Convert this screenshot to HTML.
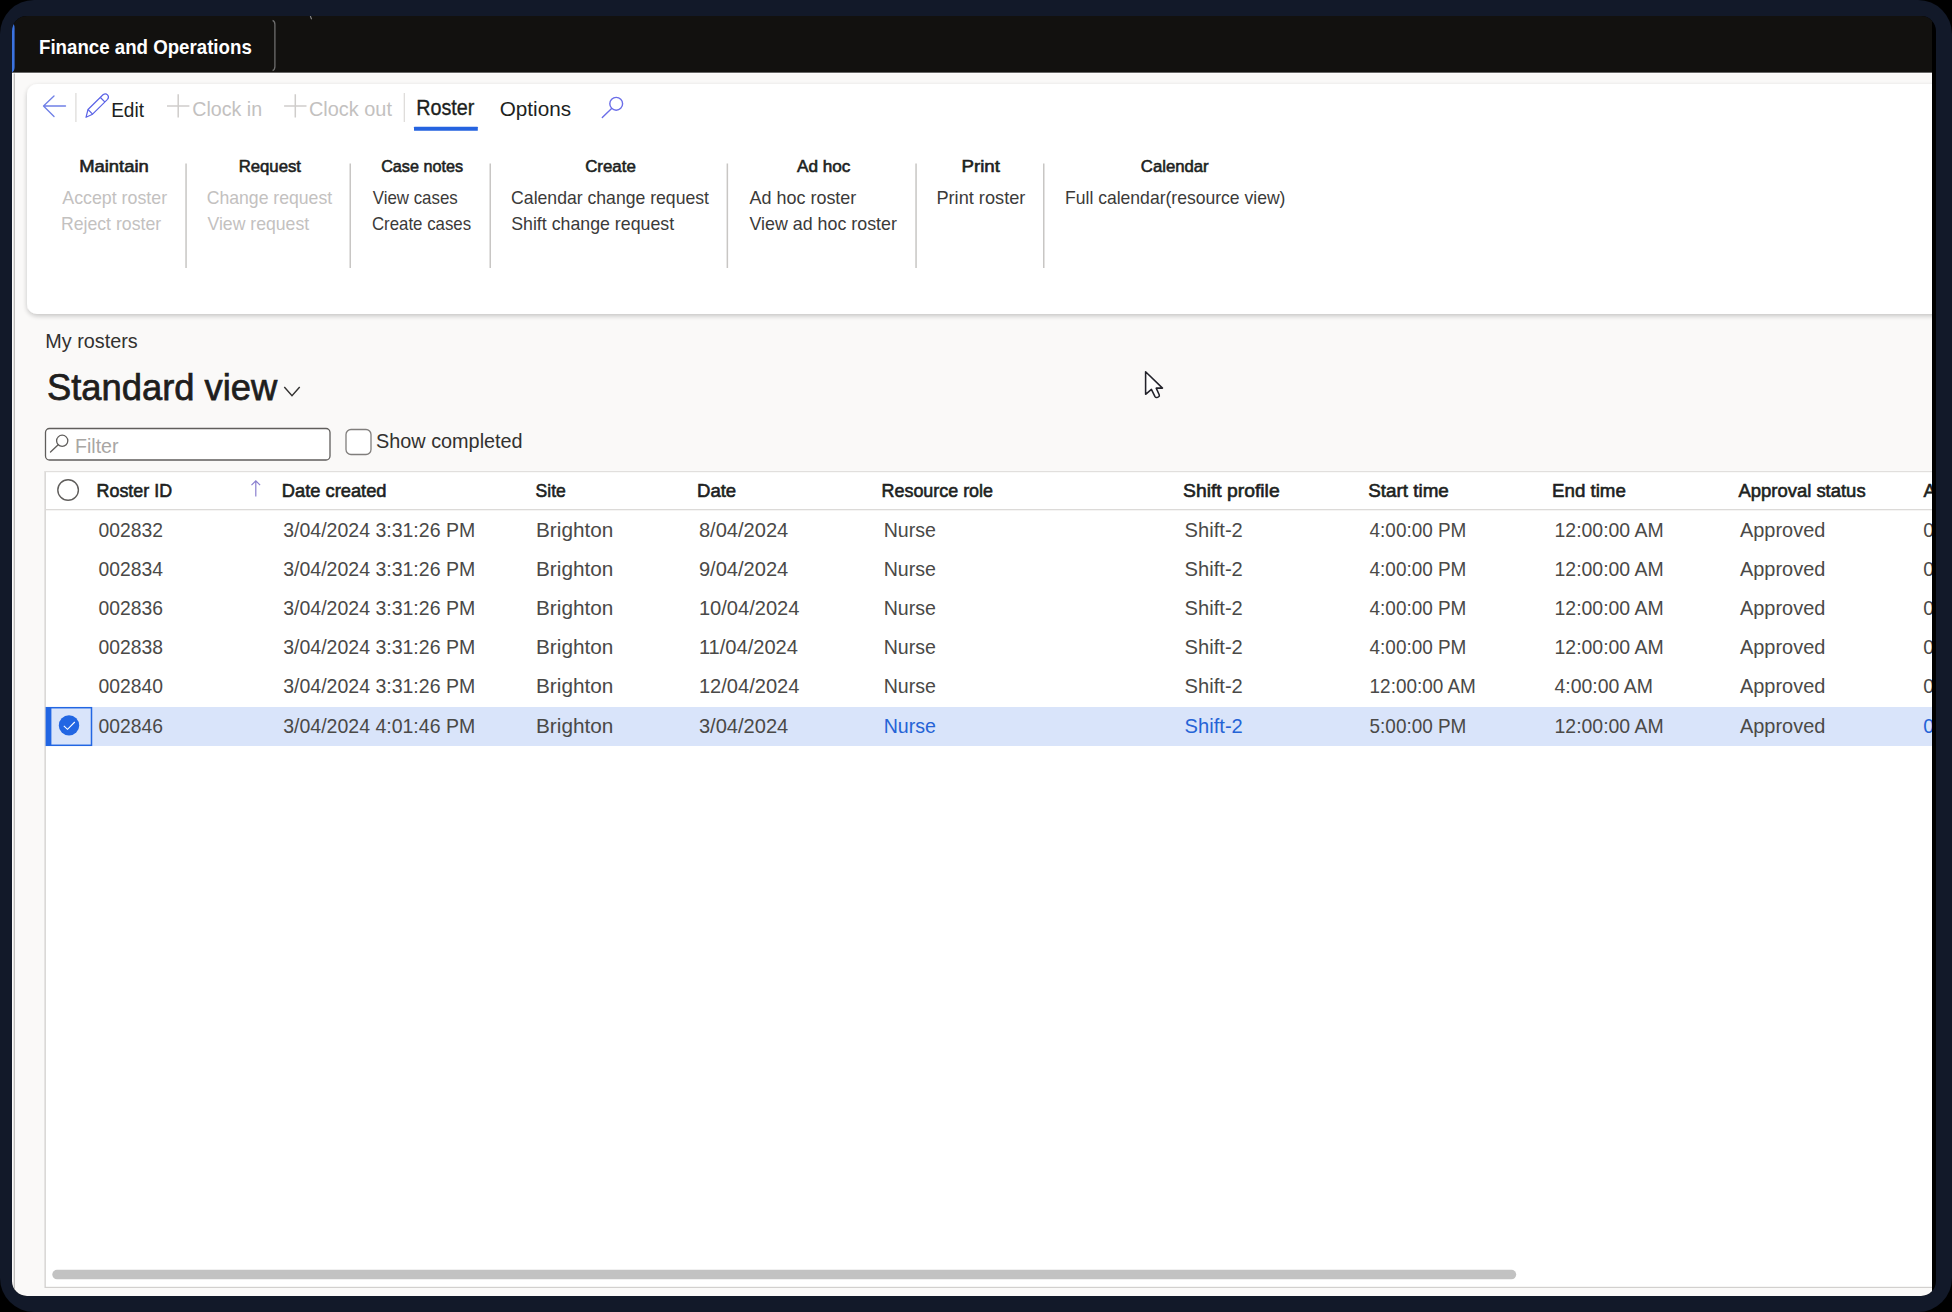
<!DOCTYPE html>
<html><head><meta charset="utf-8"><title>My rosters</title>
<style>html,body{margin:0;padding:0;background:#000;overflow:hidden}svg{display:block}text{font-family:"Liberation Sans",sans-serif;white-space:pre}</style>
</head><body>
<svg width="1952" height="1312" viewBox="0 0 1952 1312">
<rect x="0" y="0" width="1952" height="1312" fill="#000"/>
<rect x="0" y="0" width="1952" height="1312" rx="34" fill="#121929"/>
<defs><clipPath id="win"><rect x="12" y="16" width="1924" height="1280" rx="15"/></clipPath><clipPath id="cl"><rect x="0" y="0" width="1932" height="1312"/></clipPath></defs>
<g clip-path="url(#win)">
<rect x="12" y="16" width="1924" height="1280" fill="#000"/>
<rect x="12" y="72.5" width="1920" height="1224" fill="#faf9f8"/><rect x="12" y="72.5" width="1920" height="1.2" fill="#ffffff"/>
<rect x="12" y="16" width="1920" height="56.5" fill="#12110f"/>
<path d="M12 22.5 Q14.6 24 14.6 28 V67 Q14.6 71 12 72.5 Z" fill="#3b73e0"/>
<rect x="13.7" y="73.5" width="1.2" height="1223" fill="#b9b7b5"/>
<g clip-path="url(#cl)">
<path d="M272.6 20.4 Q274.9 21.4 274.9 24.5 V66.5 Q274.9 69.6 272.6 70.6" stroke="#6e6e6e" stroke-width="1.3" fill="none"/>
<path d="M310.3 16 L311.6 19.3" stroke="#8a8a8a" stroke-width="1.1"/>
<text x="38.99" y="53.80" font-size="21" font-weight="700" fill="#ffffff" textLength="212.79" lengthAdjust="spacingAndGlyphs">Finance and Operations</text>
<defs><filter id="sh" x="-5%" y="-20%" width="110%" height="140%"><feGaussianBlur in="SourceAlpha" stdDeviation="2.5"/><feOffset dy="1.5"/><feComponentTransfer><feFuncA type="linear" slope="0.22"/></feComponentTransfer><feMerge><feMergeNode/><feMergeNode in="SourceGraphic"/></feMerge></filter></defs>
<rect x="27" y="84" width="1930" height="230" rx="10" fill="#ffffff" filter="url(#sh)"/>
<path d="M65.5 106 H44 M54 96 L43.5 106 L54 116.5" stroke="#7080e6" stroke-width="1.35" fill="none" stroke-linecap="round" stroke-linejoin="round"/>
<rect x="75.3" y="93" width="1.2" height="29" fill="#dcdad8"/>
<g stroke="#5b63e6" stroke-width="1.2" fill="none" stroke-linejoin="round"><path d="M86 117.3 L88 109.5 L103 94.8 Q105.5 92.8 107.5 94.8 Q109.5 97 107.5 99.3 L92.6 114.2 Z"/><path d="M100.4 97.5 L105 102.2"/><path d="M88 109.5 L92.6 114.2"/></g>
<text x="111.18" y="116.50" font-size="21" font-weight="400" fill="#201f1e" textLength="32.78" lengthAdjust="spacingAndGlyphs">Edit</text>
<path d="M167.0 106 H189.39999999999998 M178.2 94.2 V117.5" stroke="#cfcdcb" stroke-width="1.5"/>
<path d="M284.1 106 H306.5 M295.3 94.2 V117.5" stroke="#cfcdcb" stroke-width="1.5"/>
<text x="192.22" y="116.30" font-size="21" font-weight="400" fill="#c3c1bf" textLength="69.89" lengthAdjust="spacingAndGlyphs">Clock in</text>
<text x="309.00" y="116.30" font-size="21" font-weight="400" fill="#c3c1bf" textLength="82.96" lengthAdjust="spacingAndGlyphs">Clock out</text>
<rect x="403.7" y="93" width="1.2" height="29" fill="#dcdad8"/>
<text x="416.22" y="115.10" font-size="21.5" font-weight="400" fill="#201f1e" textLength="58.18" lengthAdjust="spacingAndGlyphs" stroke="#201f1e" stroke-width="0.35">Roster</text>
<rect x="414" y="126.8" width="63.8" height="4" rx="0.5" fill="#2563e0"/>
<text x="499.67" y="116.00" font-size="21" font-weight="400" fill="#201f1e" textLength="71.38" lengthAdjust="spacingAndGlyphs">Options</text>
<g stroke="#6b6ee8" stroke-width="1.4" fill="none"><circle cx="616.2" cy="103.8" r="6.4"/><path d="M611.6 108.4 L602.3 117.6" stroke-linecap="round"/></g>
<text x="79.23" y="171.50" font-size="15.7" font-weight="400" fill="#201f1e" textLength="69.57" lengthAdjust="spacingAndGlyphs" stroke="#201f1e" stroke-width="0.55">Maintain</text>
<text x="238.66" y="171.50" font-size="15.7" font-weight="400" fill="#201f1e" textLength="62.30" lengthAdjust="spacingAndGlyphs" stroke="#201f1e" stroke-width="0.55">Request</text>
<text x="381.19" y="171.50" font-size="15.7" font-weight="400" fill="#201f1e" textLength="81.85" lengthAdjust="spacingAndGlyphs" stroke="#201f1e" stroke-width="0.55">Case notes</text>
<text x="585.16" y="171.50" font-size="15.7" font-weight="400" fill="#201f1e" textLength="50.63" lengthAdjust="spacingAndGlyphs" stroke="#201f1e" stroke-width="0.55">Create</text>
<text x="797.00" y="171.50" font-size="15.7" font-weight="400" fill="#201f1e" textLength="53.40" lengthAdjust="spacingAndGlyphs" stroke="#201f1e" stroke-width="0.55">Ad hoc</text>
<text x="961.51" y="171.50" font-size="15.7" font-weight="400" fill="#201f1e" textLength="38.41" lengthAdjust="spacingAndGlyphs" stroke="#201f1e" stroke-width="0.55">Print</text>
<text x="1140.86" y="171.50" font-size="15.7" font-weight="400" fill="#201f1e" textLength="67.84" lengthAdjust="spacingAndGlyphs" stroke="#201f1e" stroke-width="0.55">Calendar</text>
<text x="62.30" y="203.80" font-size="19" font-weight="400" fill="#c3c1bf" textLength="104.79" lengthAdjust="spacingAndGlyphs">Accept roster</text>
<text x="60.89" y="230.00" font-size="19" font-weight="400" fill="#c3c1bf" textLength="100.24" lengthAdjust="spacingAndGlyphs">Reject roster</text>
<text x="206.72" y="203.80" font-size="19" font-weight="400" fill="#c3c1bf" textLength="125.39" lengthAdjust="spacingAndGlyphs">Change request</text>
<text x="207.51" y="230.00" font-size="19" font-weight="400" fill="#c3c1bf" textLength="101.63" lengthAdjust="spacingAndGlyphs">View request</text>
<text x="372.72" y="203.80" font-size="19" font-weight="400" fill="#3b3a39" textLength="85.07" lengthAdjust="spacingAndGlyphs">View cases</text>
<text x="371.96" y="230.00" font-size="19" font-weight="400" fill="#3b3a39" textLength="99.16" lengthAdjust="spacingAndGlyphs">Create cases</text>
<text x="511.12" y="203.80" font-size="19" font-weight="400" fill="#3b3a39" textLength="197.87" lengthAdjust="spacingAndGlyphs">Calendar change request</text>
<text x="511.20" y="230.00" font-size="19" font-weight="400" fill="#3b3a39" textLength="162.94" lengthAdjust="spacingAndGlyphs">Shift change request</text>
<text x="749.60" y="203.80" font-size="19" font-weight="400" fill="#3b3a39" textLength="106.71" lengthAdjust="spacingAndGlyphs">Ad hoc roster</text>
<text x="749.51" y="230.00" font-size="19" font-weight="400" fill="#3b3a39" textLength="147.43" lengthAdjust="spacingAndGlyphs">View ad hoc roster</text>
<text x="936.45" y="203.80" font-size="19" font-weight="400" fill="#3b3a39" textLength="88.92" lengthAdjust="spacingAndGlyphs">Print roster</text>
<text x="1065.00" y="203.80" font-size="19" font-weight="400" fill="#3b3a39" textLength="220.47" lengthAdjust="spacingAndGlyphs">Full calendar(resource view)</text>
<rect x="185.3" y="163.5" width="1.5" height="104.5" fill="#c8c6c4"/>
<rect x="349.5" y="163.5" width="1.5" height="104.5" fill="#c8c6c4"/>
<rect x="489.5" y="163.5" width="1.5" height="104.5" fill="#c8c6c4"/>
<rect x="726.6" y="163.5" width="1.5" height="104.5" fill="#c8c6c4"/>
<rect x="915.3" y="163.5" width="1.5" height="104.5" fill="#c8c6c4"/>
<rect x="1043.0" y="163.5" width="1.5" height="104.5" fill="#c8c6c4"/>
<text x="45.32" y="347.60" font-size="21" font-weight="400" fill="#323130" textLength="92.42" lengthAdjust="spacingAndGlyphs">My rosters</text>
<text x="46.96" y="399.50" font-size="37.8" font-weight="400" fill="#1f1e1d" textLength="230.33" lengthAdjust="spacingAndGlyphs" stroke="#1f1e1d" stroke-width="0.75">Standard view</text>
<path d="M284.3 387 L292 395.8 L299.7 387" stroke="#323130" stroke-width="1.4" fill="none"/>
<rect x="45.5" y="428.5" width="284.5" height="31.5" rx="4" fill="#fff" stroke="#605e5c" stroke-width="1.3"/>
<g stroke="#605e5c" stroke-width="1.3" fill="none"><circle cx="62.2" cy="440.8" r="5.6"/><path d="M58.2 444.8 L50.5 452" stroke-linecap="round"/></g>
<text x="75.03" y="453.30" font-size="20" font-weight="400" fill="#a8a6a4" textLength="43.50" lengthAdjust="spacingAndGlyphs">Filter</text>
<rect x="346" y="429.5" width="25" height="25" rx="5" fill="#fff" stroke="#807e7c" stroke-width="1.3"/>
<text x="376.01" y="447.60" font-size="20.6" font-weight="400" fill="#323130" textLength="146.65" lengthAdjust="spacingAndGlyphs">Show completed</text>
<rect x="45" y="471.5" width="1890" height="816" fill="#ffffff"/>
<rect x="44.5" y="471" width="1.3" height="817" fill="#d2d0ce"/>
<rect x="45" y="471" width="1890" height="1.2" fill="#e1dfdd"/>
<rect x="45" y="1286.8" width="1890" height="1.2" fill="#d2d0ce"/>
<rect x="45" y="509" width="1890" height="1.3" fill="#dcdad8"/>
<circle cx="68.1" cy="490" r="10.3" fill="none" stroke="#605e5c" stroke-width="1.4"/>
<text x="96.57" y="497.00" font-size="18.5" font-weight="400" fill="#201f1e" textLength="75.49" lengthAdjust="spacingAndGlyphs" stroke="#201f1e" stroke-width="0.6">Roster ID</text>
<text x="281.84" y="497.00" font-size="18.5" font-weight="400" fill="#201f1e" textLength="104.66" lengthAdjust="spacingAndGlyphs" stroke="#201f1e" stroke-width="0.6">Date created</text>
<text x="535.61" y="497.00" font-size="18.5" font-weight="400" fill="#201f1e" textLength="30.24" lengthAdjust="spacingAndGlyphs" stroke="#201f1e" stroke-width="0.6">Site</text>
<text x="697.02" y="497.00" font-size="18.5" font-weight="400" fill="#201f1e" textLength="39.16" lengthAdjust="spacingAndGlyphs" stroke="#201f1e" stroke-width="0.6">Date</text>
<text x="881.57" y="497.00" font-size="18.5" font-weight="400" fill="#201f1e" textLength="111.44" lengthAdjust="spacingAndGlyphs" stroke="#201f1e" stroke-width="0.6">Resource role</text>
<text x="1183.13" y="497.00" font-size="18.5" font-weight="400" fill="#201f1e" textLength="96.49" lengthAdjust="spacingAndGlyphs" stroke="#201f1e" stroke-width="0.6">Shift profile</text>
<text x="1368.25" y="497.00" font-size="18.5" font-weight="400" fill="#201f1e" textLength="80.57" lengthAdjust="spacingAndGlyphs" stroke="#201f1e" stroke-width="0.6">Start time</text>
<text x="1552.00" y="497.00" font-size="18.5" font-weight="400" fill="#201f1e" textLength="73.87" lengthAdjust="spacingAndGlyphs" stroke="#201f1e" stroke-width="0.6">End time</text>
<text x="1738.50" y="497.00" font-size="18.5" font-weight="400" fill="#201f1e" textLength="127.10" lengthAdjust="spacingAndGlyphs" stroke="#201f1e" stroke-width="0.6">Approval status</text>
<g clip-path="url(#cl)"><text x="1923.50" y="497.00" font-size="18.5" font-weight="400" fill="#201f1e" textLength="12.34" lengthAdjust="spacingAndGlyphs" stroke="#201f1e" stroke-width="0.6">A</text></g>
<path d="M255.8 496.5 V481 M251.5 485.2 L255.8 480.8 L260.1 485.2" stroke="#8a7fcf" stroke-width="1.2" fill="none"/>
<rect x="46" y="707" width="1886" height="39" fill="#d9e4fa"/>
<rect x="45.8" y="707" width="5.6" height="39" fill="#2266e3"/>
<rect x="46.5" y="707.7" width="45" height="37.6" fill="none" stroke="#2266e3" stroke-width="1.5"/>
<circle cx="69" cy="725.4" r="10.2" fill="#2266e3"/>
<path d="M63.8 725.8 L67.5 729.3 L74.8 722" stroke="#fff" stroke-width="1.1" fill="none"/>
<g clip-path="url(#cl)"><text x="98.53" y="536.60" font-size="21" font-weight="400" fill="#4a4947" textLength="64.38" lengthAdjust="spacingAndGlyphs">002832</text><text x="283.22" y="536.60" font-size="21" font-weight="400" fill="#4a4947" textLength="191.96" lengthAdjust="spacingAndGlyphs">3/04/2024 3:31:26 PM</text><text x="536.04" y="536.60" font-size="21" font-weight="400" fill="#4a4947" textLength="77.30" lengthAdjust="spacingAndGlyphs">Brighton</text><text x="698.90" y="536.60" font-size="21" font-weight="400" fill="#4a4947" textLength="89.38" lengthAdjust="spacingAndGlyphs">8/04/2024</text><text x="883.63" y="536.60" font-size="21" font-weight="400" fill="#4a4947" textLength="52.30" lengthAdjust="spacingAndGlyphs">Nurse</text><text x="1184.59" y="536.60" font-size="21" font-weight="400" fill="#4a4947" textLength="58.22" lengthAdjust="spacingAndGlyphs">Shift-2</text><text x="1369.62" y="536.60" font-size="21" font-weight="400" fill="#4a4947" textLength="96.67" lengthAdjust="spacingAndGlyphs">4:00:00 PM</text><text x="1554.54" y="536.60" font-size="21" font-weight="400" fill="#4a4947" textLength="109.12" lengthAdjust="spacingAndGlyphs">12:00:00 AM</text><text x="1740.00" y="536.60" font-size="21" font-weight="400" fill="#4a4947" textLength="85.31" lengthAdjust="spacingAndGlyphs">Approved</text><text x="1923.21" y="536.60" font-size="21" font-weight="400" fill="#4a4947" textLength="10.98" lengthAdjust="spacingAndGlyphs">0</text><text x="98.53" y="575.78" font-size="21" font-weight="400" fill="#4a4947" textLength="64.38" lengthAdjust="spacingAndGlyphs">002834</text><text x="283.22" y="575.78" font-size="21" font-weight="400" fill="#4a4947" textLength="191.96" lengthAdjust="spacingAndGlyphs">3/04/2024 3:31:26 PM</text><text x="536.04" y="575.78" font-size="21" font-weight="400" fill="#4a4947" textLength="77.30" lengthAdjust="spacingAndGlyphs">Brighton</text><text x="698.90" y="575.78" font-size="21" font-weight="400" fill="#4a4947" textLength="89.38" lengthAdjust="spacingAndGlyphs">9/04/2024</text><text x="883.63" y="575.78" font-size="21" font-weight="400" fill="#4a4947" textLength="52.30" lengthAdjust="spacingAndGlyphs">Nurse</text><text x="1184.59" y="575.78" font-size="21" font-weight="400" fill="#4a4947" textLength="58.22" lengthAdjust="spacingAndGlyphs">Shift-2</text><text x="1369.62" y="575.78" font-size="21" font-weight="400" fill="#4a4947" textLength="96.67" lengthAdjust="spacingAndGlyphs">4:00:00 PM</text><text x="1554.54" y="575.78" font-size="21" font-weight="400" fill="#4a4947" textLength="109.12" lengthAdjust="spacingAndGlyphs">12:00:00 AM</text><text x="1740.00" y="575.78" font-size="21" font-weight="400" fill="#4a4947" textLength="85.31" lengthAdjust="spacingAndGlyphs">Approved</text><text x="1923.21" y="575.78" font-size="21" font-weight="400" fill="#4a4947" textLength="10.98" lengthAdjust="spacingAndGlyphs">0</text><text x="98.53" y="614.96" font-size="21" font-weight="400" fill="#4a4947" textLength="64.38" lengthAdjust="spacingAndGlyphs">002836</text><text x="283.22" y="614.96" font-size="21" font-weight="400" fill="#4a4947" textLength="191.96" lengthAdjust="spacingAndGlyphs">3/04/2024 3:31:26 PM</text><text x="536.04" y="614.96" font-size="21" font-weight="400" fill="#4a4947" textLength="77.30" lengthAdjust="spacingAndGlyphs">Brighton</text><text x="698.90" y="614.96" font-size="21" font-weight="400" fill="#4a4947" textLength="100.56" lengthAdjust="spacingAndGlyphs">10/04/2024</text><text x="883.63" y="614.96" font-size="21" font-weight="400" fill="#4a4947" textLength="52.30" lengthAdjust="spacingAndGlyphs">Nurse</text><text x="1184.59" y="614.96" font-size="21" font-weight="400" fill="#4a4947" textLength="58.22" lengthAdjust="spacingAndGlyphs">Shift-2</text><text x="1369.62" y="614.96" font-size="21" font-weight="400" fill="#4a4947" textLength="96.67" lengthAdjust="spacingAndGlyphs">4:00:00 PM</text><text x="1554.54" y="614.96" font-size="21" font-weight="400" fill="#4a4947" textLength="109.12" lengthAdjust="spacingAndGlyphs">12:00:00 AM</text><text x="1740.00" y="614.96" font-size="21" font-weight="400" fill="#4a4947" textLength="85.31" lengthAdjust="spacingAndGlyphs">Approved</text><text x="1923.21" y="614.96" font-size="21" font-weight="400" fill="#4a4947" textLength="10.98" lengthAdjust="spacingAndGlyphs">0</text><text x="98.53" y="654.14" font-size="21" font-weight="400" fill="#4a4947" textLength="64.38" lengthAdjust="spacingAndGlyphs">002838</text><text x="283.22" y="654.14" font-size="21" font-weight="400" fill="#4a4947" textLength="191.96" lengthAdjust="spacingAndGlyphs">3/04/2024 3:31:26 PM</text><text x="536.04" y="654.14" font-size="21" font-weight="400" fill="#4a4947" textLength="77.30" lengthAdjust="spacingAndGlyphs">Brighton</text><text x="698.90" y="654.14" font-size="21" font-weight="400" fill="#4a4947" textLength="99.07" lengthAdjust="spacingAndGlyphs">11/04/2024</text><text x="883.63" y="654.14" font-size="21" font-weight="400" fill="#4a4947" textLength="52.30" lengthAdjust="spacingAndGlyphs">Nurse</text><text x="1184.59" y="654.14" font-size="21" font-weight="400" fill="#4a4947" textLength="58.22" lengthAdjust="spacingAndGlyphs">Shift-2</text><text x="1369.62" y="654.14" font-size="21" font-weight="400" fill="#4a4947" textLength="96.67" lengthAdjust="spacingAndGlyphs">4:00:00 PM</text><text x="1554.54" y="654.14" font-size="21" font-weight="400" fill="#4a4947" textLength="109.12" lengthAdjust="spacingAndGlyphs">12:00:00 AM</text><text x="1740.00" y="654.14" font-size="21" font-weight="400" fill="#4a4947" textLength="85.31" lengthAdjust="spacingAndGlyphs">Approved</text><text x="1923.21" y="654.14" font-size="21" font-weight="400" fill="#4a4947" textLength="10.98" lengthAdjust="spacingAndGlyphs">0</text><text x="98.53" y="693.32" font-size="21" font-weight="400" fill="#4a4947" textLength="64.38" lengthAdjust="spacingAndGlyphs">002840</text><text x="283.22" y="693.32" font-size="21" font-weight="400" fill="#4a4947" textLength="191.96" lengthAdjust="spacingAndGlyphs">3/04/2024 3:31:26 PM</text><text x="536.04" y="693.32" font-size="21" font-weight="400" fill="#4a4947" textLength="77.30" lengthAdjust="spacingAndGlyphs">Brighton</text><text x="698.90" y="693.32" font-size="21" font-weight="400" fill="#4a4947" textLength="100.56" lengthAdjust="spacingAndGlyphs">12/04/2024</text><text x="883.63" y="693.32" font-size="21" font-weight="400" fill="#4a4947" textLength="52.30" lengthAdjust="spacingAndGlyphs">Nurse</text><text x="1184.59" y="693.32" font-size="21" font-weight="400" fill="#4a4947" textLength="58.22" lengthAdjust="spacingAndGlyphs">Shift-2</text><text x="1369.62" y="693.32" font-size="21" font-weight="400" fill="#4a4947" textLength="106.14" lengthAdjust="spacingAndGlyphs">12:00:00 AM</text><text x="1554.54" y="693.32" font-size="21" font-weight="400" fill="#4a4947" textLength="98.31" lengthAdjust="spacingAndGlyphs">4:00:00 AM</text><text x="1740.00" y="693.32" font-size="21" font-weight="400" fill="#4a4947" textLength="85.31" lengthAdjust="spacingAndGlyphs">Approved</text><text x="1923.21" y="693.32" font-size="21" font-weight="400" fill="#4a4947" textLength="10.98" lengthAdjust="spacingAndGlyphs">0</text><text x="98.53" y="732.50" font-size="21" font-weight="400" fill="#4a4947" textLength="64.38" lengthAdjust="spacingAndGlyphs">002846</text><text x="283.22" y="732.50" font-size="21" font-weight="400" fill="#4a4947" textLength="191.96" lengthAdjust="spacingAndGlyphs">3/04/2024 4:01:46 PM</text><text x="536.04" y="732.50" font-size="21" font-weight="400" fill="#4a4947" textLength="77.30" lengthAdjust="spacingAndGlyphs">Brighton</text><text x="698.90" y="732.50" font-size="21" font-weight="400" fill="#4a4947" textLength="89.38" lengthAdjust="spacingAndGlyphs">3/04/2024</text><text x="883.63" y="732.50" font-size="21" font-weight="400" fill="#2563d6" textLength="52.30" lengthAdjust="spacingAndGlyphs">Nurse</text><text x="1184.59" y="732.50" font-size="21" font-weight="400" fill="#2563d6" textLength="58.22" lengthAdjust="spacingAndGlyphs">Shift-2</text><text x="1369.62" y="732.50" font-size="21" font-weight="400" fill="#4a4947" textLength="96.67" lengthAdjust="spacingAndGlyphs">5:00:00 PM</text><text x="1554.54" y="732.50" font-size="21" font-weight="400" fill="#4a4947" textLength="109.12" lengthAdjust="spacingAndGlyphs">12:00:00 AM</text><text x="1740.00" y="732.50" font-size="21" font-weight="400" fill="#4a4947" textLength="85.31" lengthAdjust="spacingAndGlyphs">Approved</text><text x="1923.21" y="732.50" font-size="21" font-weight="400" fill="#2563d6" textLength="10.98" lengthAdjust="spacingAndGlyphs">0</text></g>
<rect x="52.3" y="1269.8" width="1463.9" height="9.5" rx="4.75" fill="#c2c2c2"/>
</g></g>
<path d="M1145.6 371.8 V394.3 L1151.4 389.4 L1155 396.6 Q1155.9 398 1157.4 397.4 L1158.5 396.9 Q1159.8 396.1 1159.2 394.7 L1156.2 388.1 L1162.5 388.1 Z" fill="#fff" stroke="#22222a" stroke-width="1.55" stroke-linejoin="round"/>
</svg>
</body></html>
